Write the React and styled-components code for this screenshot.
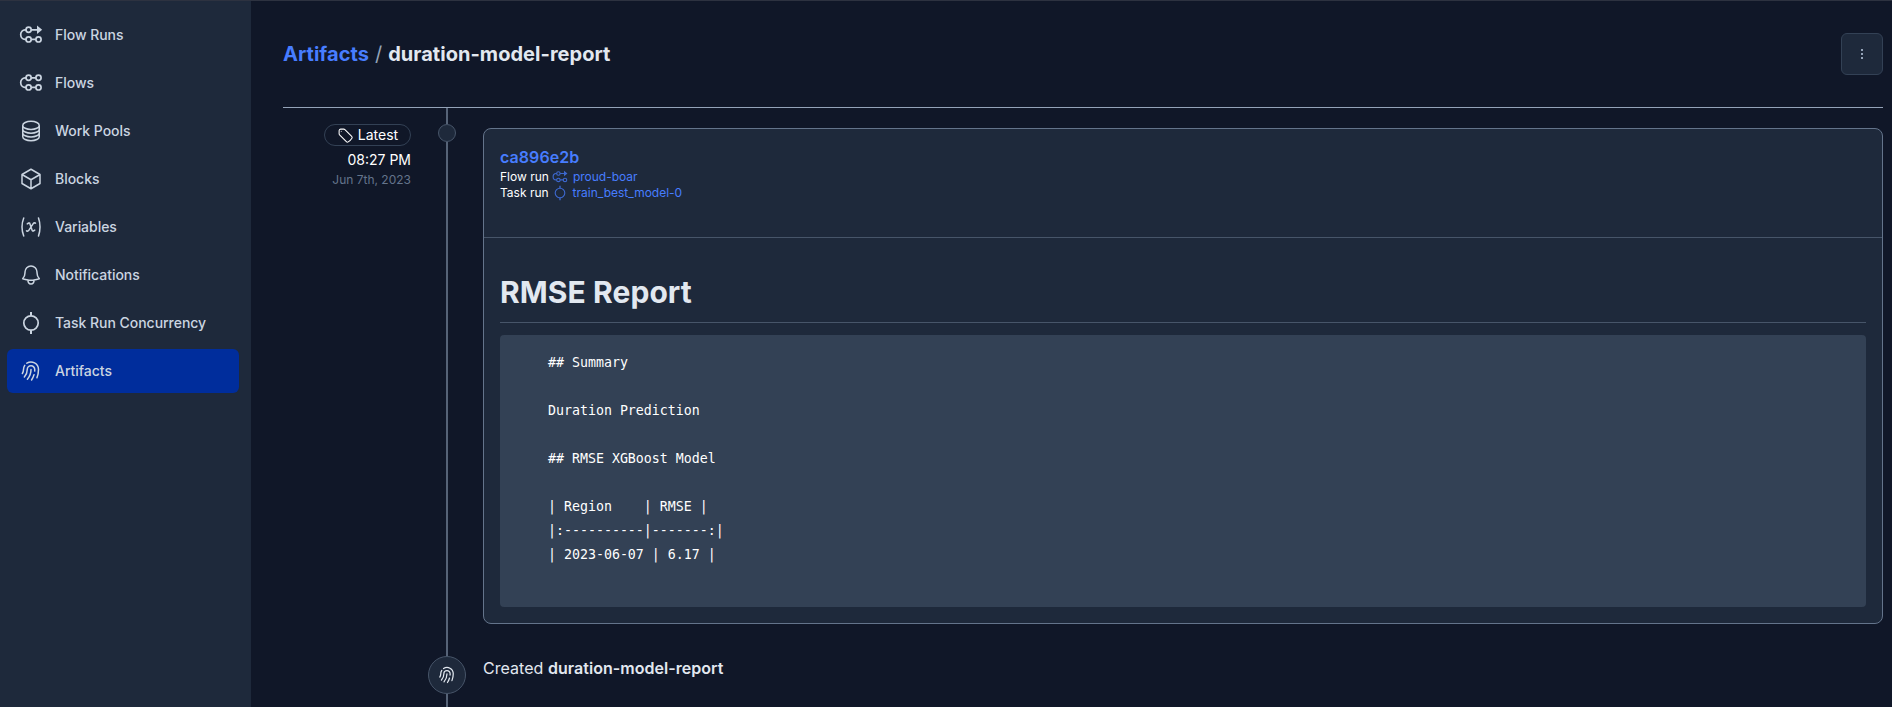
import React from 'react';
import styled, { createGlobalStyle } from 'styled-components';
import {
  HiOutlineCircleStack,
  HiOutlineCube,
  HiOutlineVariable,
  HiOutlineBell,
  HiOutlineFingerPrint,
  HiOutlineTag,
} from 'react-icons/hi2';

const GlobalStyle = createGlobalStyle`
  *, *::before, *::after { box-sizing: border-box; }
  body {
    margin: 0;
    background: #101728;
    color: #ffffff;
    font-family: Inter, "Liberation Sans", sans-serif;
    font-size: 16px;
    line-height: 24px;
    overflow: hidden;
  }
`;

const Page = styled.div`
  display: flex;
  height: 100vh;
  overflow: hidden;
  border-top: 1px solid #2d3240;
`;

const Sidebar = styled.nav`
  display: flex;
  flex-direction: column;
  gap: 4px;
  flex: 0 0 251px;
  padding: 12px 12px 0 7px;
  background: #1e293b;
`;

const NavItem = styled.a`
  display: flex;
  align-items: center;
  gap: 12px;
  height: 44px;
  padding: 0 12px;
  border-radius: 6px;
  background: ${(p) => (p.$active ? '#002d9c' : 'transparent')};
  color: #cbd5e1;
  font-size: 14px;
  font-weight: 500;
  line-height: 20px;
  letter-spacing: -0.03px;

  svg { width: 24px; height: 24px; flex: none; }
`;

const Main = styled.main`
  flex: 1;
  min-width: 0;
  padding: 32px 9px 0 32px;
`;

const Header = styled.header`
  display: flex;
  align-items: flex-start;
  justify-content: space-between;
  height: 75px;
  border-bottom: 1px solid #94a3b8;
`;

const Breadcrumbs = styled.h2`
  display: flex;
  gap: 6px;
  margin: 7px 0 0;
  font-size: 20px;
  font-weight: 700;
  line-height: 28px;
  letter-spacing: 0.04px;
`;

const Crumb = styled.span`
  color: ${(p) => (p.$link ? '#477dff' : '#e2e8f0')};
`;

const Separator = styled.span`
  color: #94a3b8;
  font-weight: 400;
`;

const MenuButton = styled.button`
  display: flex;
  flex-direction: column;
  align-items: center;
  justify-content: center;
  gap: 2px;
  width: 42px;
  height: 42px;
  padding: 0;
  border: 1px solid #334155;
  border-radius: 6px;
  background: #1e293b;
`;

const Dot = styled.i`
  width: 2px;
  height: 2px;
  background: #94a3b8;
`;

const TimelineRow = styled.section`
  display: grid;
  grid-template-columns: 128px 40px minmax(0, 1fr);
  column-gap: 16px;
  height: ${(p) => p.$height}px;
`;

const Meta = styled.div`
  display: flex;
  flex-direction: column;
  align-items: flex-end;
  padding-top: 16px;
`;

const LatestTag = styled.span`
  display: flex;
  align-items: center;
  justify-content: center;
  gap: 4px;
  width: 87px;
  height: 22px;
  border: 1px solid #334155;
  border-radius: 11px;
  font-size: 14px;
  line-height: 20px;

  svg { width: 17px; height: 17px; }
`;

const Time = styled.span`
  margin-top: 4px;
  font-size: 14px;
  line-height: 20px;
`;

const DateText = styled.span`
  margin-top: 2px;
  color: #64748b;
  font-size: 12px;
  line-height: 16px;
`;

const Rail = styled.div`
  display: flex;
  flex-direction: column;
  align-items: center;
`;

const RailLine = styled.div`
  width: 2px;
  flex: ${(p) => (p.$length ? `0 0 ${p.$length}px` : '1')};
  background: #566377;
`;

const RailPoint = styled.div`
  display: flex;
  align-items: center;
  justify-content: center;
  flex: none;
  width: ${(p) => p.$size}px;
  height: ${(p) => p.$size}px;
  border: 1px solid #475569;
  border-radius: 50%;
  background: #1e293b;
  color: #e2e8f0;

  svg { width: 20px; height: 20px; }
`;

const Card = styled.article`
  height: 496px;
  margin-top: 20px;
  border: 1px solid #64748b;
  border-radius: 8px;
  background: #1e293b;
`;

const CardHeader = styled.div`
  height: 109px;
  padding: 16px 16px 0;
  border-bottom: 1px solid #475569;
`;

const ArtifactId = styled.a`
  display: block;
  color: #477dff;
  font-weight: 600;
  line-height: 24px;
  letter-spacing: 0.06px;
`;

const RunLine = styled.div`
  display: flex;
  align-items: center;
  height: 16px;
  font-size: 12px;
  line-height: 16px;
`;

const RunLink = styled.a`
  display: flex;
  align-items: center;
  gap: 5px;
  margin-left: 3px;
  color: #477dff;

  svg { width: 16px; height: 16px; opacity: 0.75; }
`;

const CardBody = styled.div`
  padding: 33px 16px 16px;
`;

const ReportTitle = styled.h1`
  height: 52px;
  margin: 0 0 12px;
  border-bottom: 1px solid #475569;
  color: #e2e8f0;
  font-size: 30px;
  font-weight: 700;
  line-height: 42px;
  letter-spacing: 0.08px;
`;

const CodeBlock = styled.pre`
  height: 272px;
  margin: 0;
  padding: 16px 16px 16px 48px;
  border-radius: 4px;
  background: #334155;
  color: #ffffff;
  font-family: "DejaVu Sans Mono", "Liberation Mono", monospace;
  font-size: 13.288px;
  line-height: 24px;
`;

const EventText = styled.p`
  margin: 16px 0 0;
  color: #e2e8f0;
  letter-spacing: 0.04px;

  strong { font-weight: 600; }
`;

const IconSvg = ({ children }) => (
  <svg viewBox="0 0 24 24" fill="none" stroke="currentColor" strokeWidth="1.7">
    {children}
  </svg>
);

const FlowIcon = () => (
  <IconSvg>
    <circle cx="9.6" cy="6.8" r="2.6" />
    <circle cx="19.5" cy="6.8" r="2.6" />
    <circle cx="9.6" cy="16.4" r="2.6" />
    <circle cx="19.5" cy="16.4" r="2.6" />
    <path d="M12.2 6.8h4.7M12.2 16.4h4.7M7 6.8H6a4.3 4.8 0 0 0 0 9.6h1" />
  </IconSvg>
);

const FlowRunIcon = () => (
  <IconSvg>
    <circle cx="9.6" cy="6.8" r="2.6" />
    <circle cx="9.6" cy="16.4" r="2.6" />
    <circle cx="19.5" cy="16.4" r="2.6" />
    <path d="M12.2 6.8h6M12.2 16.4h4.7M7 6.8H6a4.3 4.8 0 0 0 0 9.6h1" />
    <path d="M18 2.6l5.2 4.2-5.2 4.2z" fill="currentColor" stroke="none" />
  </IconSvg>
);

const TaskIcon = () => (
  <IconSvg>
    <circle cx="12" cy="12" r="7.2" />
    <path d="M12 1v3.8M12 19.2V23" strokeWidth="2" />
  </IconSvg>
);

const navItems = [
  { label: 'Flow Runs', icon: FlowRunIcon },
  { label: 'Flows', icon: FlowIcon },
  { label: 'Work Pools', icon: HiOutlineCircleStack },
  { label: 'Blocks', icon: HiOutlineCube },
  { label: 'Variables', icon: HiOutlineVariable },
  { label: 'Notifications', icon: HiOutlineBell },
  { label: 'Task Run Concurrency', icon: TaskIcon },
  { label: 'Artifacts', icon: HiOutlineFingerPrint, active: true },
];

const report = `## Summary

Duration Prediction

## RMSE XGBoost Model

| Region    | RMSE |
|:----------|-------:|
| 2023-06-07 | 6.17 |
`;

export default function App() {
  return (
    <Page>
      <GlobalStyle />
      <Sidebar>
        {navItems.map(({ label, icon: Icon, active }) => (
          <NavItem key={label} $active={active}>
            <Icon />
            {label}
          </NavItem>
        ))}
      </Sidebar>
      <Main>
        <Header>
          <Breadcrumbs>
            <Crumb $link>Artifacts</Crumb>
            <Separator>/</Separator>
            <Crumb>duration-model-report</Crumb>
          </Breadcrumbs>
          <MenuButton aria-label="More">
            <Dot />
            <Dot />
            <Dot />
          </MenuButton>
        </Header>
        <TimelineRow $height={532}>
          <Meta>
            <LatestTag>
              <HiOutlineTag />
              Latest
            </LatestTag>
            <Time>08:27 PM</Time>
            <DateText>Jun 7th, 2023</DateText>
          </Meta>
          <Rail>
            <RailLine $length={16} />
            <RailPoint $size={18} />
            <RailLine />
          </Rail>
          <Card>
            <CardHeader>
              <ArtifactId>ca896e2b</ArtifactId>
              <RunLine>
                Flow run
                <RunLink>
                  <FlowRunIcon />
                  proud-boar
                </RunLink>
              </RunLine>
              <RunLine>
                Task run
                <RunLink>
                  <TaskIcon />
                  train_best_model-0
                </RunLink>
              </RunLine>
            </CardHeader>
            <CardBody>
              <ReportTitle>RMSE Report</ReportTitle>
              <CodeBlock>{report}</CodeBlock>
            </CardBody>
          </Card>
        </TimelineRow>
        <TimelineRow $height={80}>
          <Meta />
          <Rail>
            <RailLine $length={16} />
            <RailPoint $size={38}>
              <HiOutlineFingerPrint />
            </RailPoint>
            <RailLine />
          </Rail>
          <EventText>
            Created <strong>duration-model-report</strong>
          </EventText>
        </TimelineRow>
      </Main>
    </Page>
  );
}
